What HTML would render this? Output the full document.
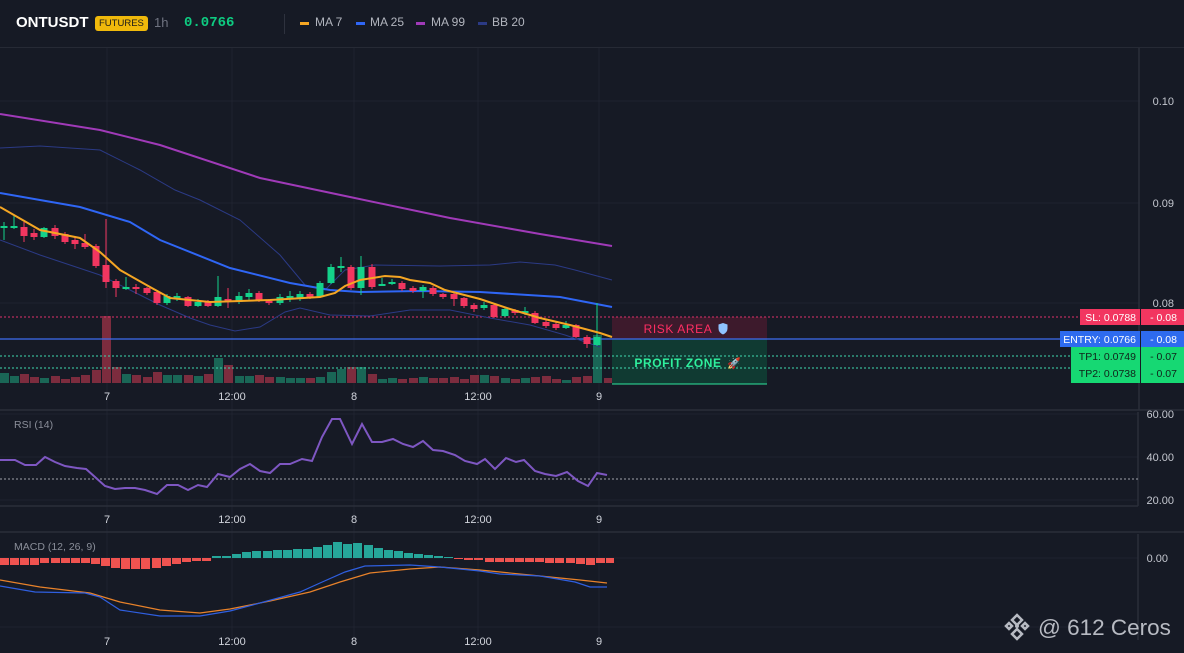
<!DOCTYPE html>
<html><head><meta charset="utf-8"><style>
html,body{margin:0;padding:0;background:#161a25;width:1184px;height:653px;overflow:hidden;font-family:"Liberation Sans",sans-serif}
#hdr{position:absolute;left:0;top:0;width:1184px;height:47px;border-bottom:1px solid #262a35;background:#161a25}
.t{position:absolute;top:15px;font-size:13px;color:#b2b5be;white-space:nowrap}
svg{position:absolute;left:0;top:0}
</style></head><body>
<svg width="1184" height="653" viewBox="0 0 1184 653" font-family="Liberation Sans, sans-serif">
<g stroke="#1f2330" stroke-width="1">
<line x1="0" y1="101" x2="1140" y2="101"/><line x1="0" y1="203" x2="1140" y2="203"/><line x1="0" y1="303" x2="1140" y2="303"/>
<line x1="107" y1="48" x2="107" y2="640"/><line x1="232" y1="48" x2="232" y2="640"/><line x1="354" y1="48" x2="354" y2="640"/><line x1="478" y1="48" x2="478" y2="640"/><line x1="599" y1="48" x2="599" y2="640"/>
<line x1="0" y1="457" x2="1138" y2="457"/><line x1="0" y1="414" x2="1138" y2="414"/><line x1="0" y1="500" x2="1138" y2="500"/>
<line x1="0" y1="558" x2="1138" y2="558"/><line x1="0" y1="627" x2="1138" y2="627"/>
</g>
<g stroke="#2a2e3a" stroke-width="1.5">
<line x1="0" y1="410" x2="1184" y2="410"/><line x1="0" y1="532" x2="1184" y2="532"/>
<line x1="1139" y1="48" x2="1139" y2="410"/><line x1="1138" y1="412" x2="1138" y2="506"/><line x1="0" y1="506" x2="1138" y2="506"/><line x1="1138" y1="534" x2="1138" y2="640"/>
</g>
<g fill="#7c2c3e">
<rect x="20" y="374" width="9" height="9"/><rect x="30" y="377" width="9" height="6"/><rect x="51" y="376" width="9" height="7"/><rect x="61" y="379" width="9" height="4"/><rect x="71" y="377" width="9" height="6"/><rect x="81" y="375" width="9" height="8"/><rect x="92" y="370" width="9" height="13"/><rect x="102" y="316" width="9" height="67"/><rect x="112" y="367" width="9" height="16"/><rect x="132" y="375" width="9" height="8"/><rect x="143" y="377" width="9" height="6"/><rect x="153" y="372" width="9" height="11"/><rect x="184" y="375" width="9" height="8"/><rect x="204" y="374" width="9" height="9"/><rect x="224" y="365" width="9" height="18"/><rect x="255" y="375" width="9" height="8"/><rect x="265" y="377" width="9" height="6"/><rect x="306" y="378" width="9" height="5"/><rect x="347" y="367" width="9" height="16"/><rect x="368" y="374" width="9" height="9"/><rect x="398" y="379" width="9" height="4"/><rect x="409" y="378" width="9" height="5"/><rect x="429" y="378" width="9" height="5"/><rect x="439" y="378" width="9" height="5"/><rect x="450" y="377" width="9" height="6"/><rect x="460" y="379" width="9" height="4"/><rect x="470" y="375" width="9" height="8"/><rect x="490" y="376" width="9" height="7"/><rect x="511" y="379" width="9" height="4"/><rect x="531" y="377" width="9" height="6"/><rect x="542" y="376" width="9" height="7"/><rect x="552" y="379" width="9" height="4"/><rect x="572" y="377" width="9" height="6"/><rect x="583" y="376" width="9" height="7"/><rect x="604" y="378" width="8" height="5"/>
</g>
<g fill="#1a6656">
<rect x="0" y="373" width="9" height="10"/><rect x="10" y="376" width="9" height="7"/><rect x="40" y="378" width="9" height="5"/><rect x="122" y="374" width="9" height="9"/><rect x="163" y="375" width="9" height="8"/><rect x="173" y="375" width="9" height="8"/><rect x="194" y="376" width="9" height="7"/><rect x="214" y="358" width="9" height="25"/><rect x="235" y="376" width="9" height="7"/><rect x="245" y="376" width="9" height="7"/><rect x="276" y="377" width="9" height="6"/><rect x="286" y="378" width="9" height="5"/><rect x="296" y="378" width="9" height="5"/><rect x="316" y="377" width="9" height="6"/><rect x="327" y="372" width="9" height="11"/><rect x="337" y="369" width="9" height="14"/><rect x="357" y="367" width="9" height="16"/><rect x="378" y="379" width="9" height="4"/><rect x="388" y="378" width="9" height="5"/><rect x="419" y="377" width="9" height="6"/><rect x="480" y="375" width="9" height="8"/><rect x="501" y="378" width="9" height="5"/><rect x="521" y="378" width="9" height="5"/><rect x="562" y="380" width="9" height="3"/><rect x="593" y="335" width="9" height="48"/>
</g>
<rect x="612" y="317" width="155" height="22" fill="#3d1a2c"/>
<rect x="612" y="339" width="155" height="45" fill="#103a32"/>
<line x1="612" y1="384" x2="767" y2="384" stroke="#2ee59d" stroke-width="1"/>
<line x1="0" y1="317" x2="1080" y2="317" stroke="#e0306a" stroke-width="1" stroke-dasharray="2,2"/>
<line x1="0" y1="339" x2="1060" y2="339" stroke="#3d6cf0" stroke-width="1.2"/>
<line x1="0" y1="356" x2="1071" y2="356" stroke="#3fd9b0" stroke-width="1" stroke-dasharray="2,2"/>
<line x1="0" y1="368" x2="1071" y2="368" stroke="#3fd9b0" stroke-width="1" stroke-dasharray="2,2"/>
<text x="678" y="333" fill="#ff2e63" font-size="12" text-anchor="middle" letter-spacing="0.6">RISK AREA</text>
<path d="M723 323 l4.5 1.5 v4 q0 4 -4.5 6 q-4.5 -2 -4.5 -6 v-4z" fill="#8fc3ff"/>
<text x="678" y="367" fill="#2ef09d" font-size="12" text-anchor="middle" font-weight="bold" letter-spacing="0.6">PROFIT ZONE</text>
<text x="734" y="367" fill="#e06" font-size="11" text-anchor="middle">🚀</text>
<g fill="none" stroke-width="1">
<polyline stroke="#2b3a85" points="0,148 40,146 100,150 140,170 175,190 200,200 240,220 280,255 305,285 325,290 345,270 375,265 440,266 490,265 520,262 555,265 575,270 612,280"/>
<polyline stroke="#2b3a85" points="0,240 40,255 100,275 130,290 160,305 190,318 210,325 235,331 260,327 285,312 300,308 330,315 370,316 410,310 450,310 490,318 530,325 565,335 600,347"/>
</g>
<polyline fill="none" stroke="#a03ab8" stroke-width="2" points="0,114 100,130 160,145 260,178 350,197 450,218 540,234 612,246"/>
<polyline fill="none" stroke="#2f66f5" stroke-width="2" points="0,193 40,200 80,207 130,222 160,240 230,268 290,283 330,290 360,292 420,291 480,292 560,297 612,307"/>
<path stroke="#f23660" stroke-width="1" fill="none" d="M24 222V242M34 229V240M55 225V239M65 232V244M75 237V249M85 234V249M96 244V268M106 219V288M116 279V297M136 284V294M147 287V295M157 291V305M188 296V307M208 300V307M228 288V308M259 291V302M269 299V305M310 292V299M351 265V290M372 264V289M402 281V291M413 286V293M433 286V296M443 293V299M454 293V306M464 297V308M474 303V312M494 303V318M515 309V315M535 311V324M546 320V328M556 322V330M576 324V338M587 335V348"/>
<path fill="#f23660" d="M20.5 227h7v9h-7zM30.5 233h7v4h-7zM51.5 228h7v8h-7zM61.5 234h7v8h-7zM71.5 240h7v4h-7zM81.5 243h7v4h-7zM92.5 246h7v20h-7zM102.5 265h7v17h-7zM112.5 281h7v7h-7zM132.5 287h7v2h-7zM143.5 288h7v5h-7zM153.5 292h7v11h-7zM184.5 297h7v9h-7zM204.5 302h7v4h-7zM224.5 299h7v2h-7zM255.5 293h7v7h-7zM265.5 301h7v2h-7zM306.5 294h7v3h-7zM347.5 267h7v21h-7zM368.5 267h7v20h-7zM398.5 283h7v6h-7zM409.5 288h7v3h-7zM429.5 288h7v6h-7zM439.5 294h7v3h-7zM450.5 294h7v5h-7zM460.5 298h7v8h-7zM470.5 305h7v4h-7zM490.5 305h7v12h-7zM511.5 310h7v3h-7zM531.5 313h7v10h-7zM542.5 322h7v4h-7zM552.5 324h7v4h-7zM572.5 325h7v12h-7zM583.5 337h7v7h-7z"/>
<path stroke="#14d18a" stroke-width="1" fill="none" d="M4 222V240M14 216V229M44 227V238M126 277V290M167 294V305M177 293V301M198 299V307M218 276V307M239 292V304M249 289V300M280 294V305M290 291V302M300 291V301M320 281V298M331 264V284M341 257V272M361 256V295M382 278V286M392 279V285M423 285V298M484 302V310M505 307V317M525 307V315M566 321V329M597 303V346"/>
<path fill="#14d18a" d="M0.5 226h7v2h-7zM10.5 226h7v2h-7zM40.5 228h7v9h-7zM122.5 287h7v2h-7zM163.5 296h7v7h-7zM173.5 296h7v2h-7zM194.5 302h7v4h-7zM214.5 297h7v9h-7zM235.5 296h7v6h-7zM245.5 293h7v4h-7zM276.5 297h7v6h-7zM286.5 296h7v2h-7zM296.5 294h7v4h-7zM316.5 283h7v14h-7zM327.5 267h7v16h-7zM337.5 266h7v2h-7zM357.5 267h7v21h-7zM378.5 284h7v2h-7zM388.5 282h7v2h-7zM419.5 287h7v4h-7zM480.5 305h7v3h-7zM501.5 309h7v7h-7zM521.5 311h7v2h-7zM562.5 325h7v3h-7zM593.5 337h7v8h-7z"/>
<polyline fill="none" stroke="#f5a623" stroke-width="2" points="0,207 40,230 80,238 100,252 120,270 150,287 170,298 210,302 270,300 320,297 335,293 345,286 360,280 385,276 400,277 410,280 430,283 445,290 480,299 510,309 540,318 570,325 600,333 612,337"/>
<g fill="#c4c7cf" font-size="11" text-anchor="end">
<text x="1174" y="105">0.10</text><text x="1174" y="207">0.09</text><text x="1174" y="307">0.08</text>
<text x="1174" y="418">60.00</text><text x="1174" y="461">40.00</text><text x="1174" y="504">20.00</text><text x="1168" y="562">0.00</text>
</g>
<rect x="1080" y="309" width="60" height="16" fill="#f23660"/><rect x="1141" y="309" width="43" height="16" fill="#f23660"/>
<rect x="1060" y="331" width="80" height="16" fill="#2e6bef"/><rect x="1141" y="331" width="43" height="16" fill="#2e6bef"/>
<rect x="1071" y="347" width="69" height="36" fill="#16d873"/><rect x="1141" y="347" width="43" height="36" fill="#16d873"/>
<g font-size="10.5" text-anchor="end">
<text x="1136" y="321" fill="#fff">SL: 0.0788</text><text x="1177" y="321" fill="#fff">- 0.08</text>
<text x="1136" y="343" fill="#fff">ENTRY: 0.0766</text><text x="1177" y="343" fill="#fff">- 0.08</text>
<text x="1136" y="360" fill="#10231a">TP1: 0.0749</text><text x="1177" y="360" fill="#10231a">- 0.07</text>
<text x="1136" y="377" fill="#10231a">TP2: 0.0738</text><text x="1177" y="377" fill="#10231a">- 0.07</text>
</g>
<g fill="#d1d4dc" font-size="11" text-anchor="middle">
<text x="107" y="400">7</text><text x="232" y="400">12:00</text><text x="354" y="400">8</text><text x="478" y="400">12:00</text><text x="599" y="400">9</text>
<text x="107" y="523">7</text><text x="232" y="523">12:00</text><text x="354" y="523">8</text><text x="478" y="523">12:00</text><text x="599" y="523">9</text>
<text x="107" y="645">7</text><text x="232" y="645">12:00</text><text x="354" y="645">8</text><text x="478" y="645">12:00</text><text x="599" y="645">9</text>
</g>
<text x="14" y="428" fill="#8a8e99" font-size="10.5">RSI (14)</text>
<line x1="0" y1="479" x2="1138" y2="479" stroke="#a0a3ab" stroke-width="1" stroke-dasharray="2,2"/>
<polyline fill="none" stroke="#7e57c2" stroke-width="2" points="0,460 15,460 25,465 36,465 45,457 55,462 65,466 77,468 86,469 95,477 105,486 115,489 125,488 135,488 145,490 157,494 167,485 178,485 188,490 198,485 207,487 218,474 230,477 240,469 250,464 260,471 270,473 280,464 290,464 302,459 312,461 322,437 332,419 340,419 352,444 362,424 372,442 382,442 393,439 403,444 413,447 423,441 433,450 443,451 455,455 465,461 477,464 485,459 495,469 506,458 516,462 524,460 535,471 545,474 556,476 567,472 578,481 588,486 597,473 607,475"/>
<text x="14" y="550" fill="#8a8e99" font-size="10.5">MACD (12, 26, 9)</text>
<g fill="#ef5350">
<rect x="0" y="558" width="9" height="7"/><rect x="10" y="558" width="9" height="7"/><rect x="20" y="558" width="9" height="7"/><rect x="30" y="558" width="9" height="7"/><rect x="40" y="558" width="9" height="5"/><rect x="51" y="558" width="9" height="5"/><rect x="61" y="558" width="9" height="5"/><rect x="71" y="558" width="9" height="5"/><rect x="81" y="558" width="9" height="5"/><rect x="91" y="558" width="9" height="6"/><rect x="101" y="558" width="9" height="8"/><rect x="111" y="558" width="9" height="10"/><rect x="121" y="558" width="9" height="11"/><rect x="131" y="558" width="9" height="11"/><rect x="141" y="558" width="9" height="11"/><rect x="152" y="558" width="9" height="10"/><rect x="162" y="558" width="9" height="8"/><rect x="172" y="558" width="9" height="6"/><rect x="182" y="558" width="9" height="4"/><rect x="192" y="558" width="9" height="3"/><rect x="202" y="558" width="9" height="3"/>
<rect x="454" y="558" width="9" height="1"/><rect x="464" y="558" width="9" height="2"/><rect x="474" y="558" width="9" height="2"/><rect x="485" y="558" width="9" height="4"/><rect x="495" y="558" width="9" height="4"/><rect x="505" y="558" width="9" height="4"/><rect x="515" y="558" width="9" height="4"/><rect x="525" y="558" width="9" height="4"/><rect x="535" y="558" width="9" height="4"/><rect x="545" y="558" width="9" height="5"/><rect x="555" y="558" width="9" height="5"/><rect x="566" y="558" width="9" height="5"/><rect x="576" y="558" width="9" height="6"/><rect x="586" y="558" width="9" height="7"/><rect x="596" y="558" width="9" height="5"/><rect x="606" y="558" width="8" height="5"/>
</g>
<g fill="#26a69a">
<rect x="212" y="556" width="9" height="2"/><rect x="222" y="556" width="9" height="2"/><rect x="232" y="554" width="9" height="4"/><rect x="242" y="552" width="9" height="6"/><rect x="252" y="551" width="9" height="7"/><rect x="263" y="551" width="9" height="7"/><rect x="273" y="550" width="9" height="8"/><rect x="283" y="550" width="9" height="8"/><rect x="293" y="549" width="9" height="9"/><rect x="303" y="549" width="9" height="9"/><rect x="313" y="547" width="9" height="11"/><rect x="323" y="545" width="9" height="13"/><rect x="333" y="542" width="9" height="16"/><rect x="343" y="544" width="9" height="14"/><rect x="353" y="543" width="9" height="15"/><rect x="364" y="545" width="9" height="13"/><rect x="374" y="548" width="9" height="10"/><rect x="384" y="550" width="9" height="8"/><rect x="394" y="551" width="9" height="7"/><rect x="404" y="553" width="9" height="5"/><rect x="414" y="554" width="9" height="4"/><rect x="424" y="555" width="9" height="3"/><rect x="434" y="556" width="9" height="2"/><rect x="444" y="557" width="9" height="1"/>
</g>
<polyline fill="none" stroke="#e8822a" stroke-width="1.2" points="0,580 40,587 90,593 120,602 160,610 200,613 230,609 270,601 310,592 340,582 370,573 410,569 440,567 480,570 530,575 580,580 607,583"/>
<polyline fill="none" stroke="#2f5fe0" stroke-width="1.2" points="0,586 35,592 85,593 100,597 120,610 160,616 200,616 230,611 260,603 300,592 320,583 345,572 365,566 410,565 440,567 480,571 500,574 540,576 575,582 590,587 607,587"/>
<g fill="#c9ccd3" opacity="0.9">
<path d="M1017 615l5 5-5 5-5-5zM1009 623l3 3-3 3-3-3zM1025 623l3 3-3 3-3-3zM1017 629l5 5-5 5-5-5z" fill="none" stroke="#c9ccd3" stroke-width="2.5"/>
<circle cx="1017" cy="626" r="2"/>
<text x="1038" y="635" font-size="22.5">@ 612 Ceros</text>
</g>
</svg>
<div id="hdr">
<div class="t" style="left:16px;top:14px;color:#fff;font-weight:bold;font-size:15px">ONTUSDT</div>
<div class="t" style="left:95px;top:16px;background:#f0b90b;color:#1a1a1a;font-size:9.5px;padding:2px 4px;border-radius:3px">FUTURES</div>
<div class="t" style="left:154px;top:15px;color:#6f7380;font-size:13px">1h</div>
<div class="t" style="left:184px;top:15px;color:#0ecb81;font-weight:bold;font-family:'Liberation Mono',monospace;font-size:14px">0.0766</div>
<div style="position:absolute;left:284px;top:14px;width:1px;height:20px;background:#2e323e"></div>
<div style="position:absolute;left:300px;top:22px;width:9px;height:3px;background:#f5a623"></div><div class="t" style="left:315px;font-size:12px">MA 7</div>
<div style="position:absolute;left:356px;top:22px;width:9px;height:3px;background:#2f66f5"></div><div class="t" style="left:370px;font-size:12px">MA 25</div>
<div style="position:absolute;left:416px;top:22px;width:9px;height:3px;background:#a03ab8"></div><div class="t" style="left:431px;font-size:12px">MA 99</div>
<div style="position:absolute;left:478px;top:22px;width:9px;height:3px;background:#2b3a85"></div><div class="t" style="left:492px;font-size:12px">BB 20</div>
</div>
</body></html>
